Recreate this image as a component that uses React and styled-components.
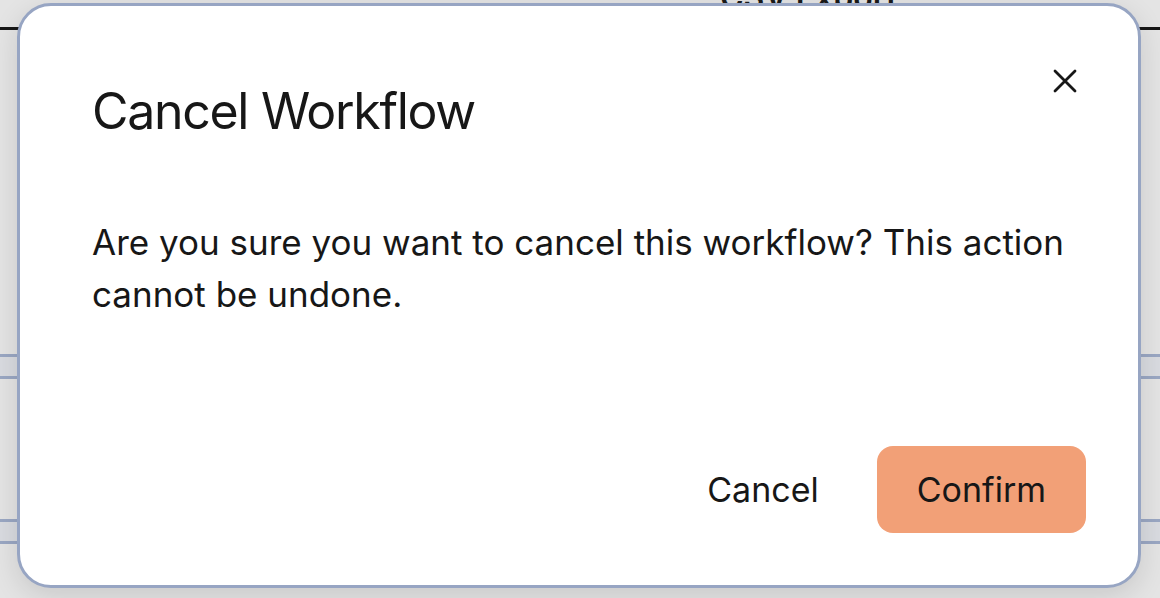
import React from "react";
import styled, { createGlobalStyle } from "styled-components";

const GlobalStyle = createGlobalStyle`
  html, body {
    margin: 0;
    padding: 0;
    width: 1160px;
    height: 598px;
    overflow: hidden;
    background: #e4e4e4;
    font-family: Inter, "Noto Sans", "Liberation Sans", sans-serif;
    color: #171717;
  }
`;

const Backdrop = styled.div`
  position: relative;
  width: 1160px;
  height: 598px;
  overflow: hidden;
  background: #e4e4e4;
`;

const PageBehind = styled.div`
  position: absolute;
  inset: 0;
  display: flex;
  flex-direction: column;
`;

const TopRule = styled.div`
  margin-top: 27px;
  height: 3px;
  background: #161616;
`;

const RowBand = styled.div`
  margin-top: ${(p) => p.$top}px;
  height: 19px;
  background: #d9dbe0;
  border-top: 3px solid #9aa7c3;
  border-bottom: 3px solid #9aa7c3;
`;

const PeekText = styled.div`
  position: absolute;
  top: -22px;
  left: 720px;
  font-size: 32px;
  font-weight: 600;
  color: #1a1a1a;
  white-space: nowrap;
`;

const Modal = styled.div`
  position: absolute;
  left: 17px;
  top: 3px;
  width: 1124px;
  height: 585px;
  box-sizing: border-box;
  background: #ffffff;
  border: 3px solid #97a5c3;
  border-radius: 34px;
  box-shadow: 0 8px 28px rgba(0, 0, 0, 0.12);
  display: flex;
  flex-direction: column;
  padding: 76px 52px 52px 72px;
`;

const Title = styled.h2`
  margin: 0;
  font-size: 50px;
  line-height: 58px;
  font-weight: 400;
  letter-spacing: -1.3px;
`;

const Body = styled.p`
  margin: 76px 0 0;
  font-size: 35px;
  line-height: 52px;
  font-weight: 400;
`;

const Footer = styled.div`
  margin-top: auto;
  display: flex;
  justify-content: flex-end;
  align-items: center;
  gap: 18px;
`;

const Button = styled.button`
  height: 87px;
  padding: 0 40px;
  border: none;
  border-radius: 16px;
  font-family: inherit;
  font-size: 34px;
  color: #171717;
  background: ${(p) => (p.$primary ? "#f2a077" : "transparent")};
  cursor: pointer;
`;

const CloseButton = styled.button`
  position: absolute;
  top: 61px;
  right: 59px;
  width: 28px;
  height: 28px;
  padding: 0;
  border: none;
  background: transparent;
  display: flex;
  align-items: center;
  justify-content: center;
`;

export default function App() {
  return (
    <>
      <GlobalStyle />
      <Backdrop>
        <PageBehind>
          <PeekText>CSV Export</PeekText>
          <TopRule />
          <RowBand $top={324} />
          <RowBand $top={140} />
        </PageBehind>
        <Modal>
          <CloseButton aria-label="Close">
            <svg width="24" height="24" viewBox="0 0 24 24">
              <path
                d="M2 2 L22 22 M22 2 L2 22"
                stroke="#171717"
                strokeWidth="2.8"
                strokeLinecap="round"
              />
            </svg>
          </CloseButton>
          <Title>Cancel Workflow</Title>
          <Body>
            Are you sure you want to cancel this workflow? This action cannot be
            undone.
          </Body>
          <Footer>
            <Button>Cancel</Button>
            <Button $primary>Confirm</Button>
          </Footer>
        </Modal>
      </Backdrop>
    </>
  );
}
